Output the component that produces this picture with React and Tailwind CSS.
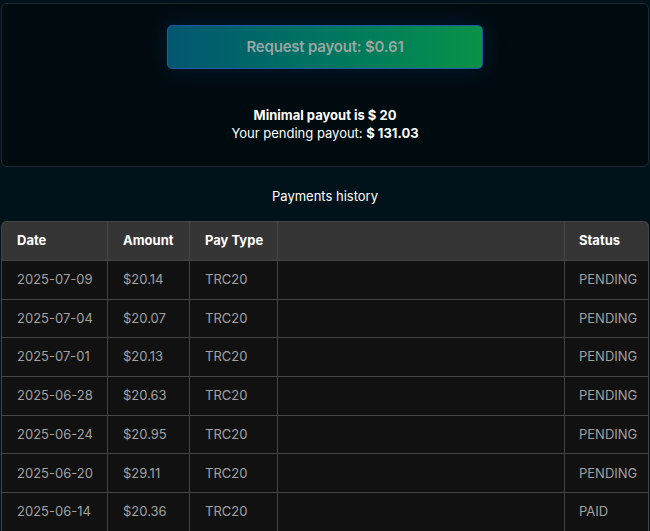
import React from "react";

const rows = [
  ["2025-07-09", "$20.14", "TRC20", "PENDING"],
  ["2025-07-04", "$20.07", "TRC20", "PENDING"],
  ["2025-07-01", "$20.13", "TRC20", "PENDING"],
  ["2025-06-28", "$20.63", "TRC20", "PENDING"],
  ["2025-06-24", "$20.95", "TRC20", "PENDING"],
  ["2025-06-20", "$29.11", "TRC20", "PENDING"],
  ["2025-06-14", "$20.36", "TRC20", "PAID"],
];

export default function App() {
  return (
    <div
      className="min-h-[531px] bg-[#02121a] pt-[3px] px-[1px] text-white"
      style={{ fontFamily: "Inter, 'Noto Sans', sans-serif" }}
    >
      <div className="h-[164px] rounded-md border border-[#1d2a30] bg-[#000b10] flex flex-col items-center pt-[21px]">
        <button className="w-[316px] h-[44px] rounded-[5px] border border-[#2456a8] bg-gradient-to-r from-[#045670] to-[#0a9246] text-[15px] font-semibold text-[#9aa6a3] shadow-[0_0_22px_rgba(10,60,120,0.35)] tracking-[-0.2px]">
          Request payout: $0.61
        </button>
        <div className="mt-[37px] text-[13px] font-bold leading-[18px]">Minimal payout is $ 20</div>
        <div className="text-[13px] leading-[18px]">
          Your pending payout: <span className="font-bold">$ 131.03</span>
        </div>
      </div>
      <div className="h-[54px] flex items-center justify-center text-[13px] pt-[5px]">
        Payments history
      </div>
      <table className="w-[648px] table-fixed border-separate border-spacing-0 text-[13px]">
        <colgroup>
          <col className="w-[106px]" />
          <col className="w-[82px]" />
          <col className="w-[88px]" />
          <col />
          <col className="w-[85px]" />
        </colgroup>
        <thead>
          <tr className="h-[39px] bg-[#353535] font-bold text-left">
            <th className="pl-[15px] border-l border-t border-[#444] rounded-tl-md font-bold">Date</th>
            <th className="pl-[15px] border-l border-t border-[#444] font-bold">Amount</th>
            <th className="pl-[15px] border-l border-t border-[#444] font-bold">Pay Type</th>
            <th className="border-l border-t border-[#444]"></th>
            <th className="pl-[14px] border-l border-t border-r border-[#444] rounded-tr-md font-bold">Status</th>
          </tr>
        </thead>
        <tbody className="text-[#a2a2a2]">
          {rows.map((r, i) => (
            <tr key={i} className="h-[38.7px] bg-[#111111]">
              <td className="pl-[15px] border-l border-t border-[#444]">{r[0]}</td>
              <td className="pl-[15px] border-l border-t border-[#444]">{r[1]}</td>
              <td className="pl-[15px] border-l border-t border-[#444]">{r[2]}</td>
              <td className="border-l border-t border-[#444]"></td>
              <td className="pl-[14px] border-l border-t border-r border-[#444]">{r[3]}</td>
            </tr>
          ))}
        </tbody>
      </table>
    </div>
  );
}
